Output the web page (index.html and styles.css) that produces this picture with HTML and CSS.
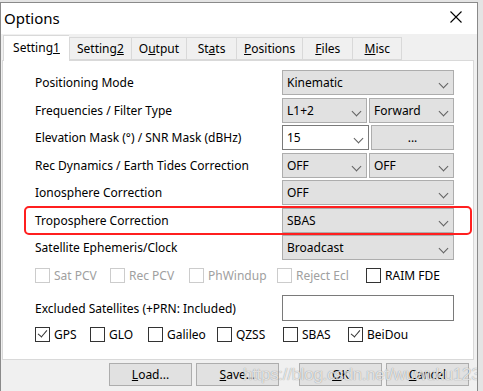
FILE: index.html
```html
<!DOCTYPE html>
<html lang="en">
<head>
    <meta charset="UTF-8">
    <title>Options</title>
    <link rel="stylesheet" href="styles.css">
</head>
<body>
    <div class="window">
        <div class="titlebar">
            <span class="title">Options</span>
            <svg class="close" width="12" height="12" viewBox="0 0 12 12">
                <path d="M0.5 0.5 L11.5 11.5 M11.5 0.5 L0.5 11.5" stroke="#000" stroke-width="1.1" fill="none"/>
            </svg>
        </div>
        <div class="client">
            <div class="tabs">
                <div class="tab active">Setting<u>1</u></div>
                <div class="tab">Setting<u>2</u></div>
                <div class="tab">O<u>u</u>tput</div>
                <div class="tab">St<u>a</u>ts</div>
                <div class="tab"><u>P</u>ositions</div>
                <div class="tab"><u>F</u>iles</div>
                <div class="tab tab-last"><u>M</u>isc</div>
            </div>
            <div class="panel">
                <div class="row">
                    <span class="label">Positioning Mode</span>
                    <div class="ctl"><div class="combo">Kinematic<span class="arrow"></span></div></div>
                </div>
                <div class="row">
                    <span class="label">Frequencies / Filter Type</span>
                    <div class="ctl">
                        <div class="combo half">L1+2<span class="arrow"></span></div>
                        <div class="combo half">Forward<span class="arrow"></span></div>
                    </div>
                </div>
                <div class="row">
                    <span class="label">Elevation Mask (°) / SNR Mask (dBHz)</span>
                    <div class="ctl">
                        <div class="combo half editable">15<span class="arrow"></span></div>
                        <div class="button half">...</div>
                    </div>
                </div>
                <div class="row">
                    <span class="label">Rec Dynamics / Earth Tides Correction</span>
                    <div class="ctl">
                        <div class="combo half">OFF<span class="arrow"></span></div>
                        <div class="combo half">OFF<span class="arrow"></span></div>
                    </div>
                </div>
                <div class="row">
                    <span class="label">Ionosphere Correction</span>
                    <div class="ctl"><div class="combo">OFF<span class="arrow"></span></div></div>
                </div>
                <div class="row">
                    <span class="label">Troposphere Correction</span>
                    <div class="ctl"><div class="combo">SBAS<span class="arrow"></span></div></div>
                </div>
                <div class="row">
                    <span class="label">Satellite Ephemeris/Clock</span>
                    <div class="ctl"><div class="combo">Broadcast<span class="arrow"></span></div></div>
                </div>

                <div class="checks opts">
                    <label class="check disabled"><span class="box"></span>Sat PCV</label>
                    <label class="check disabled"><span class="box"></span>Rec PCV</label>
                    <label class="check disabled"><span class="box"></span>PhWindup</label>
                    <label class="check disabled"><span class="box"></span>Reject Ecl</label>
                    <label class="check"><span class="box"></span>RAIM FDE</label>
                </div>

                <div class="row excl">
                    <span class="label">Excluded Satellites (+PRN: Included)</span>
                    <div class="ctl"><div class="edit"></div></div>
                </div>

                <div class="checks systems">
                    <label class="check checked"><span class="box"></span>GPS</label>
                    <label class="check"><span class="box"></span>GLO</label>
                    <label class="check"><span class="box"></span>Galileo</label>
                    <label class="check"><span class="box"></span>QZSS</label>
                    <label class="check"><span class="box"></span>SBAS</label>
                    <label class="check checked"><span class="box"></span>BeiDou</label>
                </div>
            </div>
            <div class="buttons">
                <div class="button"><u>L</u>oad...</div>
                <div class="button save"><u>S</u>ave...</div>
                <div class="button"><u>O</u>K</div>
                <div class="button"><u>C</u>ancel</div>
            </div>
        </div>
        <!-- annotation and watermark drawn over the dialog -->
        <div class="highlight"></div>
        <div class="watermark">https://blog.csdn.net/wuwuku123</div>
    </div>
</body>
</html>
```

FILE: styles.css
```css
body {
    margin: 0;
    background: #e4e4e4;
    font-family: "Noto Sans", "Open Sans", sans-serif;
    font-size: 12px;
    color: #000;
}
.window {
    position: relative;
    width: 478px;
    height: 389px;
    margin-top: 2px;
    box-sizing: border-box;
    border: 1px solid #8a8a8a;
    border-bottom: none;
    background: #f0f0f0;
    overflow: hidden;
}
.titlebar {
    height: 31px;
    background: #fff;
    display: flex;
    align-items: center;
    justify-content: space-between;
    padding: 0 15px 0 3px;
}
.title {
    font-size: 15px;
    margin-top: -2px;
}
.close {
    margin-top: -3px;
}
.client {
    padding-top: 1px;
}
.tabs {
    display: flex;
    align-items: flex-end;
    height: 26px;
    padding-left: 2px;
    position: relative;
    z-index: 1;
    margin-bottom: -1px;
}
.tab {
    height: 23px;
    min-width: 50px;
    box-sizing: border-box;
    padding: 0 7px;
    border: 1px solid #d9d9d9;
    border-right: none;
    background: #f0f0f0;
    display: flex;
    align-items: center;
    justify-content: center;
    margin-bottom: 1px;
}
.tab-last {
    border-right: 1px solid #d9d9d9;
}
.tab.active {
    height: 26px;
    width: 66px;
    background: #fff;
    border-bottom: none;
    margin-bottom: 0;
    padding-bottom: 3px;
}
.panel {
    margin-left: 1px;
    width: 472px;
    height: 300px;
    box-sizing: border-box;
    background: #fff;
    border: 1px solid #d9d9d9;
    padding: 9px 19px 0 32px;
}
.row {
    display: flex;
    justify-content: space-between;
    align-items: center;
    height: 25px;
    margin-bottom: 2.5px;
}
.label {
    white-space: nowrap;
}
.ctl {
    display: flex;
    gap: 2px;
    width: 172px;
    flex: none;
}
.combo {
    position: relative;
    flex: 1;
    height: 25px;
    box-sizing: border-box;
    background: #e1e1e1;
    border: 1px solid #adadad;
    padding-left: 4px;
    display: flex;
    align-items: center;
}
.combo.editable {
    background: #fff;
    border-color: #7a7a7a;
}
.arrow {
    position: absolute;
    right: 6px;
    top: 9px;
    width: 6px;
    height: 6px;
    border-right: 1px solid #606060;
    border-bottom: 1px solid #606060;
    transform: rotate(45deg);
}
.button {
    height: 25px;
    box-sizing: border-box;
    background: #e1e1e1;
    border: 1px solid #adadad;
    display: flex;
    align-items: center;
    justify-content: center;
}
.button.half {
    flex: 1;
}
.checks {
    display: grid;
    align-items: center;
    height: 16px;
}
.opts {
    margin-top: 7px;
    grid-template-columns: 75px 79px 88px 89px auto;
}
.systems {
    margin-top: 5px;
    grid-template-columns: 55px 58px 69px 66px 65px auto;
}
.check {
    display: flex;
    align-items: center;
    white-space: nowrap;
}
.box {
    width: 13px;
    height: 13px;
    border: 1px solid #333;
    background: #fff;
    margin-right: 4px;
    position: relative;
}
.check.disabled {
    color: #a0a0a0;
}
.check.disabled .box {
    border-color: #cccccc;
}
.check.checked .box::after {
    content: "";
    position: absolute;
    left: 4px;
    top: 0px;
    width: 4px;
    height: 8px;
    border-right: 1.3px solid #333;
    border-bottom: 1.3px solid #333;
    transform: rotate(40deg);
}
.excl {
    margin-top: 12px;
    height: 26px;
    margin-bottom: 0;
}
.edit {
    width: 172px;
    height: 26px;
    box-sizing: border-box;
    border: 1px solid #7a7a7a;
    background: #fff;
}
.buttons {
    display: flex;
    justify-content: flex-end;
    gap: 4px;
    padding: 3px 8px 0 0;
}
.buttons .button {
    width: 83px;
    height: 23px;
}
.buttons .save {
    margin-right: 16px;
}
.highlight {
    position: absolute;
    left: 23px;
    top: 203px;
    width: 448px;
    height: 29px;
    box-sizing: border-box;
    border: 2.5px solid #ff1f1f;
    border-radius: 5px;
}
.watermark {
    position: absolute;
    left: 242px;
    top: 362px;
    font-family: "Liberation Sans", Arial, sans-serif;
    font-size: 17px;
    letter-spacing: -0.3px;
    color: rgba(255, 255, 255, 0.75);
    text-shadow: 0 0 1px rgba(0, 0, 0, 0.45);
}
```
